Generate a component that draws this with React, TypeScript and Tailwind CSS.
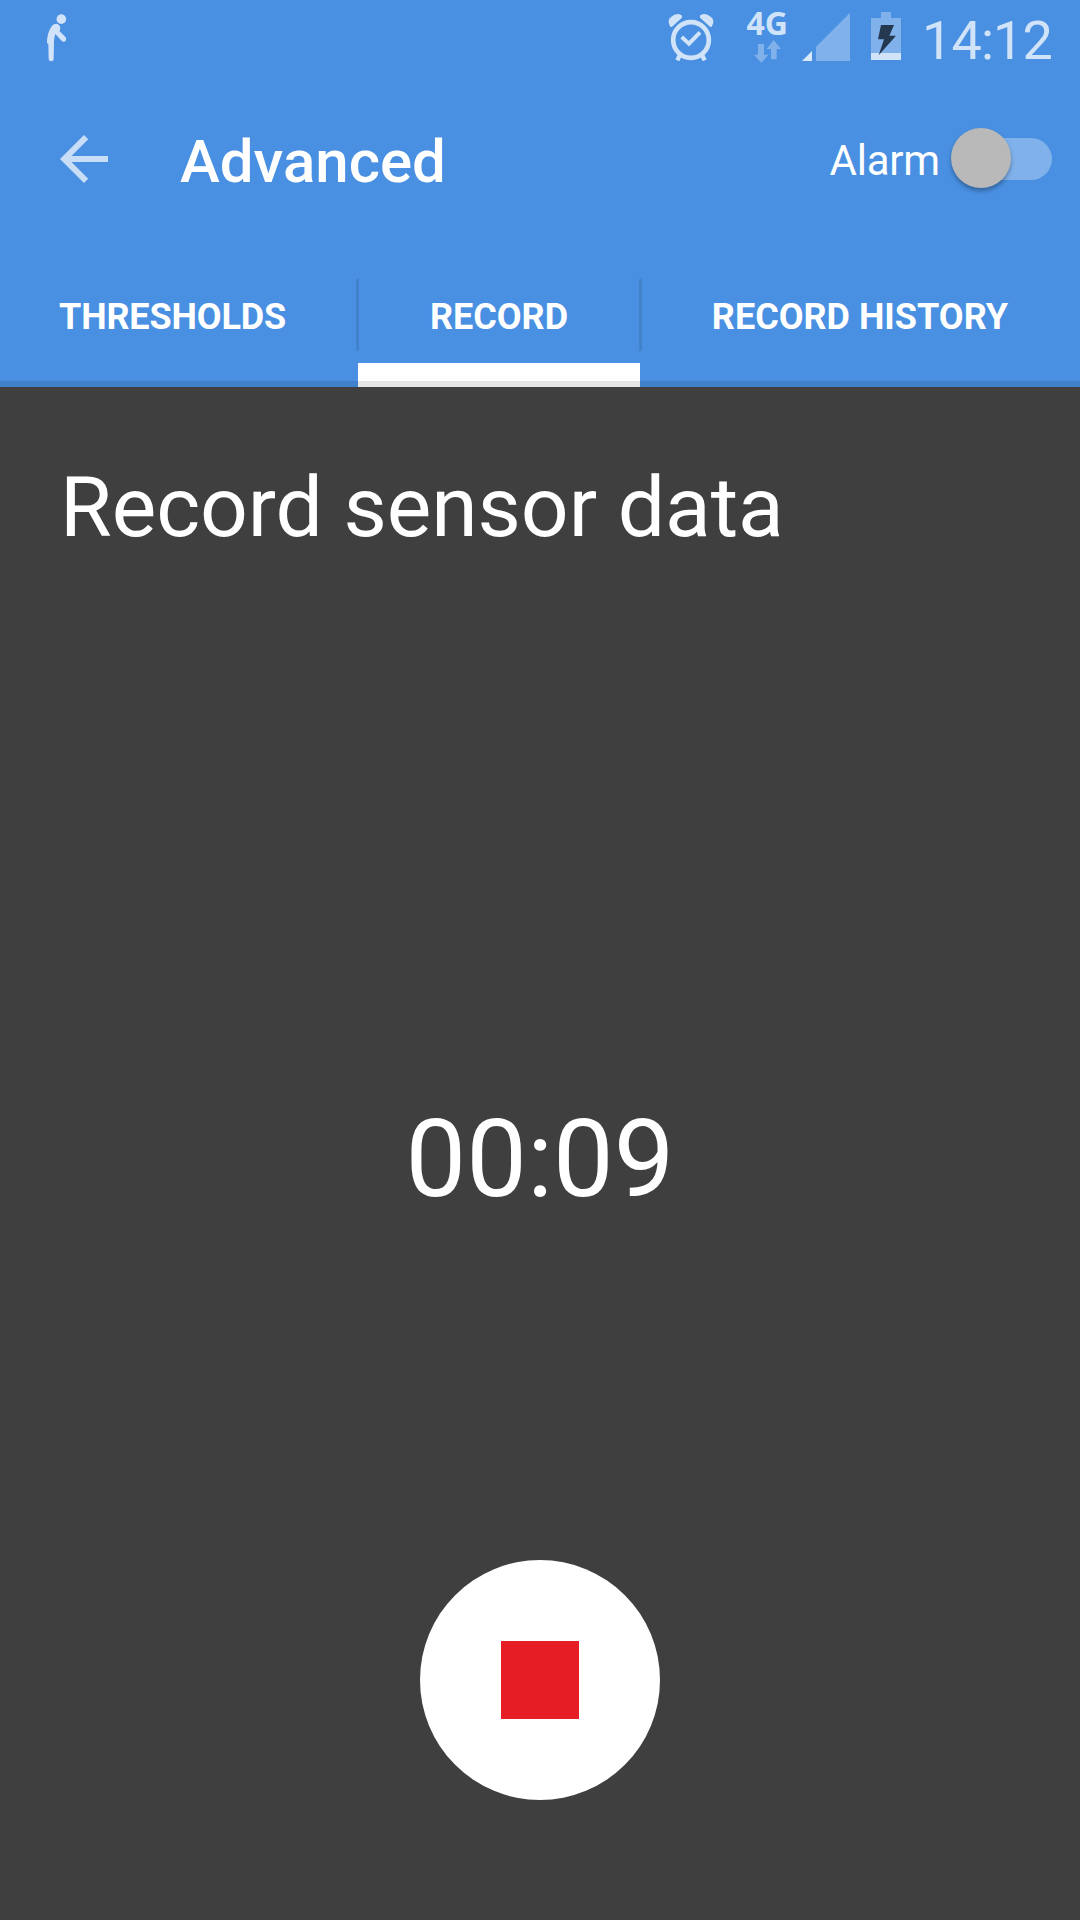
import React from "react";

function PersonIcon() {
  return (
    <svg className="h-[75px] w-[60px]" viewBox="0 0 180 225" fill="#d1e3f8">
      <circle cx="94" cy="57.500" r="14.500" />
      <path d="M66 77 Q76 68 86 74 Q91 78 91 84 L89 94 L107 112 Q110 117 107 122 Q103 127 96 124 L76 102 Q72 112 72 124 L71 178 Q70 184 64 184 Q57 184 56 178 L55 131 L51 130 Q50 100 66 77 Z" />
    </svg>
  );
}

function AlarmClockIcon() {
  return (
    <svg className="h-[75px] w-[80px]" viewBox="0 0 240 225" fill="none" stroke="#d1e3f8">
      <circle cx="108" cy="120" r="53.500" strokeWidth="14" />
      <path d="M80 111 L102 131 L135 97" strokeWidth="12" />
      <path d="M76 162 L67 181 M140 162 L149 181" strokeWidth="13" />
      <path
        d="M45 79 Q35 60 49 50 Q65 37 80 46 Q83 50 80 54 L51 80 Q47 82 45 79 Z M171 79 Q181 60 167 50 Q151 37 136 46 Q133 50 136 54 L165 80 Q169 82 171 79 Z"
        fill="#d1e3f8"
        stroke="none"
      />
    </svg>
  );
}

function NetworkType() {
  return (
    <div className="ml-[11px] flex h-[75px] w-[44px] flex-col pt-[7px]">
      <span className="h-[33px] pl-[0.500px] font-['Noto_Sans'] text-[32px] leading-[32px] font-bold text-[#d1e3f8]">4G</span>
      <svg className="ml-[8px] h-[24px] w-[27px]" viewBox="0 0 81 72" fill="#80b1eb">
        <path d="M12 12 H30 V44 H43 L22 69 L0 44 H12 Z" />
        <path d="M51 58 H68 V27 H81 L59 0 L38 27 H51 Z" />
      </svg>
    </div>
  );
}

function SignalIcon() {
  return (
    <svg className="h-[75px] w-[70px]" viewBox="0 0 210 225">
      <path d="M36 183 L66 153 V183 Z" fill="#d8e8fa" />
      <path d="M78 183 V140 L180 38 V183 Z" fill="#80b1eb" />
    </svg>
  );
}

function BatteryIcon() {
  return (
    <svg className="h-[75px] w-[60px]" viewBox="210 0 180 225">
      <path d="M243 54 H273 V36 H303 V54 H333 V159 H243 Z" fill="#80b1eb" />
      <path d="M243 159 H333 V180 H243 Z" fill="#d1e3f8" />
      <path d="M273 75 H312 L298 107 H318 L266 166 L282 118 H264 Z" fill="#24384f" />
    </svg>
  );
}

function StatusBar() {
  return (
    <div className="flex h-[75px] pl-[30px]">
      <PersonIcon />
      <div className="ml-[565px] flex">
        <AlarmClockIcon />
        <NetworkType />
        <SignalIcon />
        <BatteryIcon />
      </div>
      <span className="ml-[2px] pt-[3px] text-[54px] leading-[75px] tracking-[-0.900px] text-[#d1e3f8]">14:12</span>
    </div>
  );
}

function AlarmSwitch() {
  return (
    <div className="relative ml-[11px] h-[60px] w-[101px]">
      <div className="mt-[8.500px] ml-[11px] h-[42px] w-[90px] rounded-full bg-[#80b1eb]" />
      <div className="absolute -top-[1px] -left-[0.500px] size-[60px] rounded-full bg-[#b9b9b9] shadow-[0_3px_4px_rgba(0,0,0,0.3)]" />
    </div>
  );
}

function Toolbar() {
  return (
    <div className="flex h-[168px] items-center pr-[28px] pl-[48px]">
      <svg className="size-[72px]" viewBox="0 0 24 24" fill="#c8ddf6">
        <path d="M20 11H7.830l5.590-5.590L12 4l-8 8 8 8 1.410-1.410L7.830 13H20v-2z" />
      </svg>
      <h1 className="ml-[60px] pt-[5px] text-[60px] leading-[70px] font-medium text-white">Advanced</h1>
      <span className="ml-auto pt-[3px] text-[42px] leading-[50px] tracking-[-0.200px] text-white">Alarm</span>
      <AlarmSwitch />
    </div>
  );
}

function Tabs() {
  return (
    <nav className="relative flex h-[144px] text-[36px] leading-[148px] font-bold text-white">
      <div className="w-[358px] pl-[59px] tracking-[-0.150px]">THRESHOLDS</div>
      <div className="relative w-[282px] text-center">
        <div className="absolute top-[36px] -left-[2px] h-[72px] w-[3px] bg-[#4282cb]" />
        <div className="absolute top-[36px] -right-[2px] h-[72px] w-[3px] bg-[#4282cb]" />
        <div className="absolute bottom-0 left-0 h-[24px] w-full bg-white" />
        RECORD
      </div>
      <div className="w-[440px] text-center">RECORD HISTORY</div>
      <div className="absolute bottom-0 left-0 h-[6px] w-full bg-black/10" />
    </nav>
  );
}

export default function App() {
  return (
    <div className="flex h-[1920px] w-[1080px] flex-col overflow-hidden bg-[#3f3f3f] font-['Roboto',sans-serif]">
      <header className="bg-[#4990e2]">
        <StatusBar />
        <Toolbar />
        <Tabs />
      </header>
      <main className="flex flex-col text-white">
        <h2 className="mt-[71px] ml-[60px] text-[84px] leading-[100px] tracking-[-0.080px]">Record sensor data</h2>
        <div className="mt-[541px] text-center text-[108px] leading-[120px]">00:09</div>
        <button className="mt-[341px] flex size-[240px] items-center justify-center self-center rounded-full bg-white">
          <span className="size-[78px] bg-[#e61d24]" />
        </button>
      </main>
    </div>
  );
}
